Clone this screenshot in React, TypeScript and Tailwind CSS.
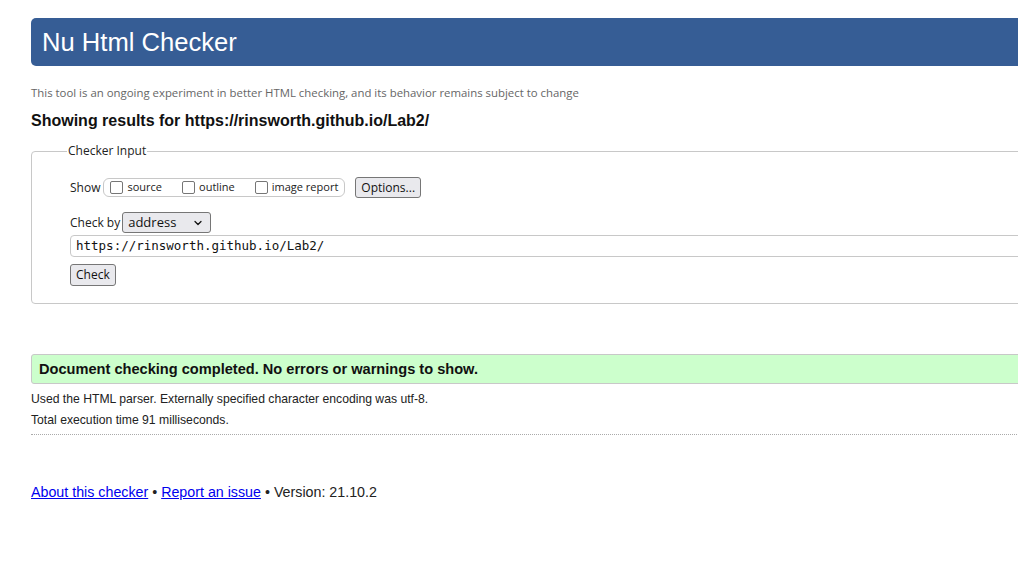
import { ChevronDown } from "lucide-react";

const ui = { fontFamily: '"Open Sans", "Noto Sans", sans-serif' };
const arial = { fontFamily: '"Liberation Sans", Arial, sans-serif' };
const mono = { fontFamily: '"DejaVu Sans Mono", "Liberation Mono", monospace' };

function Box({ label }: { label: string }) {
  return (
    <label className="flex items-center gap-[4px]">
      <span className="h-[13px] w-[13px] rounded-[2px] border border-[#767676] bg-white" />
      <span className="text-[11px] text-[#222]">{label}</span>
    </label>
  );
}

export default function App() {
  return (
    <div className="h-[579px] w-full overflow-hidden bg-white" style={arial}>
      <div className="ml-[31px] w-[1100px] pt-[18px]">
        <header className="flex h-[48px] items-center rounded-l-[5px] bg-[#365d95] pl-[11px] pt-[2px]">
          <h1 className="text-[25.6px] leading-none text-white">Nu Html Checker</h1>
        </header>

        <p className="mt-[19px] text-[11.4px] leading-[16px] text-[#666]" style={ui}>
          This tool is an ongoing experiment in better HTML checking, and its behavior remains subject to change
        </p>

        <h2 className="mt-[10px] text-[16px] font-bold leading-[20px] text-[#111]">
          Showing results for https://rinsworth.github.io/Lab2/
        </h2>

        <fieldset className="mt-[11px] h-[162px] rounded-l-[4px] border border-[#c8c8c8] pl-[38px]" style={ui}>
          <legend className="-ml-[3px] px-[1px] text-[12px] text-[#222]">Checker Input</legend>

          <div className="mt-[17px] flex items-center text-[12px] text-[#222]">
            <span>Show</span>
            <div className="ml-[3px] flex h-[19px] items-center gap-[20px] rounded-[6px] border border-[#c8c8c8] pl-[6px] pr-[6px]">
              <Box label="source" />
              <Box label="outline" />
              <Box label="image report" />
            </div>
            <button className="ml-[10px] h-[21px] rounded-[3px] border border-[#767676] bg-[#e9e9ed] px-[5px] text-[12px] text-[#111]">
              Options...
            </button>
          </div>

          <div className="mt-[14px] flex items-center text-[12px] text-[#222]">
            <span>Check by</span>
            <div className="ml-[2px] flex h-[21px] w-[89px] items-center justify-between rounded-[3px] border border-[#767676] bg-[#e9e9ed] pl-[5px] pr-[6px] text-[13px] text-[#111]">
              <span>address</span>
              <ChevronDown size={12} strokeWidth={2.5} />
            </div>
          </div>

          <div className="mt-[2px] flex h-[22px] items-center rounded-l-[4px] border border-[#c8c8c8] pl-[5px] text-[12.5px] text-[#111]" style={mono}>
            https://rinsworth.github.io/Lab2/
          </div>

          <button className="mt-[7px] h-[22px] rounded-[3px] border border-[#767676] bg-[#e9e9ed] px-[5px] text-[12px] text-[#111]">
            Check
          </button>
        </fieldset>

        <div className="mt-[50px] flex h-[30px] items-center rounded-l-[3px] border border-[#c8c8c8] bg-[#ccffcc] pl-[7px] pt-[2px]">
          <span className="text-[14.6px] font-bold text-[#111]">
            Document checking completed. No errors or warnings to show.
          </span>
        </div>

        <p className="mt-[7px] text-[12.2px] leading-[16px] text-[#222]">
          Used the HTML parser. Externally specified character encoding was utf-8.
        </p>
        <p className="mt-[5px] text-[12.2px] leading-[16px] text-[#222]">
          Total execution time 91 milliseconds.
        </p>
        <div className="mt-[6px] border-t border-dotted border-[#aaa]" />

        <p className="mt-[48px] text-[14.25px] leading-[18px] text-[#222]">
          <a href="#" className="text-[#0000ee] underline">About this checker</a>
          {" • "}
          <a href="#" className="text-[#0000ee] underline">Report an issue</a>
          {" • Version: 21.10.2"}
        </p>
      </div>
    </div>
  );
}
